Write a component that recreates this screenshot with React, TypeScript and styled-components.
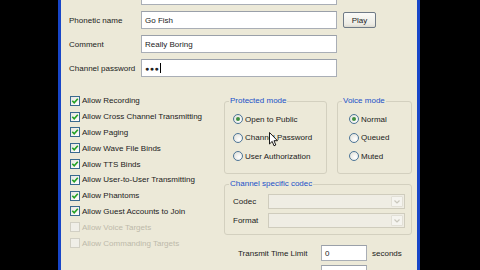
import React from 'react';
import styled, { createGlobalStyle } from 'styled-components';

const Global = createGlobalStyle`
  html, body { margin: 0; padding: 0; background: #000; width: 480px; height: 270px; overflow: hidden; }
  #root { width: 480px; height: 270px; }
`;

const Screen = styled.div`
  width: 480px;
  height: 270px;
  background: #000;
  display: flex;
`;

const Window = styled.div`
  position: relative;
  box-sizing: border-box;
  margin-left: 58px;
  width: 362px;
  height: 270px;
  border-left: 3px solid #1846c8;
  border-right: 3px solid #1846c8;
  background: #ece9d8;
  overflow: hidden;
  padding-left: 8px;
  font-family: "Liberation Sans", Arial, sans-serif;
  font-size: 8px;
  color: #1b1b1b;
`;

const Fields = styled.div`
  display: flex;
  flex-direction: column;
  gap: 6px;
  margin-top: -13px;
`;

const FieldRow = styled.div`
  display: flex;
  align-items: center;
  height: 18px;
`;

const FieldLabel = styled.span`
  width: 72px;
  flex: none;
`;

const TextBox = styled.div<{ $w?: number; $h?: number }>`
  box-sizing: border-box;
  width: ${p => p.$w ?? 196}px;
  height: ${p => p.$h ?? 18}px;
  flex: none;
  border: 1px solid #a9aeb6;
  border-top-color: #9aa0a9;
  background: #fff;
  display: flex;
  align-items: center;
  padding-left: 3px;
  color: #222;
`;

const Dots = styled.span`
  font-size: 7px;
  letter-spacing: 0.5px;
`;

const Caret = styled.span`
  display: inline-block;
  width: 1px;
  height: 10px;
  background: #000;
  margin-left: 1px;
`;

const PlayButton = styled.button`
  margin-left: 6px;
  width: 33px;
  height: 16px;
  box-sizing: border-box;
  border: 1px solid #6f7a86;
  border-radius: 2px;
  background: linear-gradient(#fbfbf8, #ecebe4 80%, #dcdad0);
  font-family: inherit;
  font-size: 8px;
  color: #222;
  padding: 0;
`;

const Middle = styled.div`
  display: flex;
  margin-top: 16px;
`;

const CheckList = styled.div`
  width: 155px;
  flex: none;
  display: flex;
  flex-direction: column;
`;

const CheckRow = styled.div<{ $disabled?: boolean }>`
  height: 15.8px;
  display: flex;
  align-items: center;
  gap: 2px;
  padding-left: 1px;
  color: ${p => (p.$disabled ? '#bdb9aa' : 'inherit')};
`;

const CheckBox = styled.span<{ $disabled?: boolean }>`
  box-sizing: border-box;
  width: 10px;
  height: 10px;
  flex: none;
  border: 1px solid ${p => (p.$disabled ? '#d2d0c4' : '#3a6a8f')};
  background: ${p => (p.$disabled ? '#f0efe8' : 'linear-gradient(135deg, #e6e6df, #ffffff)')};
  display: flex;
  align-items: center;
  justify-content: center;
`;

const RightCol = styled.div`
  width: 188px;
  flex: none;
  display: flex;
  flex-direction: column;
  margin-top: 3px;
`;

const GroupRow = styled.div`
  display: flex;
  gap: 10px;
`;

const Group = styled.fieldset<{ $w: number; $h: number }>`
  box-sizing: border-box;
  margin: 0;
  min-width: 0;
  width: ${p => p.$w}px;
  height: ${p => p.$h}px;
  padding: 0;
  border: 1px solid #d3d0bf;
  border-radius: 3px;
`;

const Legend = styled.legend`
  padding: 0 1px;
  margin-left: 4px;
  line-height: 10px;
  font-size: 8px;
  color: #2150c8;
`;

const RadioList = styled.div<{ $pl: number }>`
  display: flex;
  flex-direction: column;
  padding: 4px 0 0 ${p => p.$pl}px;
`;

const RadioRow = styled.div`
  height: 18.5px;
  display: flex;
  align-items: center;
  gap: 2px;
`;

const Radio = styled.span<{ $on?: boolean }>`
  box-sizing: border-box;
  width: 10px;
  height: 10px;
  flex: none;
  border-radius: 50%;
  border: 1px solid #4d7597;
  background: radial-gradient(circle at 65% 65%, #ffffff, #dcdcd4);
  display: flex;
  align-items: center;
  justify-content: center;
  &::after {
    content: '';
    display: ${p => (p.$on ? 'block' : 'none')};
    width: 4px;
    height: 4px;
    border-radius: 50%;
    background: #3f8f3f;
  }
`;

const CodecGroup = styled(Group)`
  margin-top: 5px;
`;

const CodecRows = styled.div`
  display: flex;
  flex-direction: column;
  gap: 4px;
  padding: 5px 0 0 8px;
`;

const CodecRow = styled.div`
  display: flex;
  align-items: center;
  height: 15px;
`;

const CodecLabel = styled.span`
  width: 35px;
  flex: none;
`;

const Select = styled.div`
  box-sizing: border-box;
  width: 137px;
  height: 15px;
  border: 1px solid #cfccbd;
  background: #efede4;
  display: flex;
  justify-content: flex-end;
  padding: 1px;
`;

const SelectArrow = styled.span`
  box-sizing: border-box;
  width: 12px;
  height: 100%;
  border: 1px solid #e2e0d6;
  border-radius: 1px;
  background: #f5f4ef;
  display: flex;
  align-items: center;
  justify-content: center;
`;

const LimitRows = styled.div`
  display: flex;
  flex-direction: column;
  gap: 4px;
  margin-top: 10px;
  padding-left: 14px;
`;

const LimitRow = styled.div`
  display: flex;
  align-items: center;
  height: 16px;
`;

const LimitLabel = styled.span`
  width: 83px;
  flex: none;
`;

const Unit = styled.span`
  margin-left: 5px;
`;

const Cursor = styled.svg`
  position: absolute;
  left: 208px;
  top: 132px;
`;

const Check = () => (
  <svg width="8" height="8" viewBox="0 0 8 8">
    <polyline points="1.3,3.8 3.2,5.8 6.8,1.8" fill="none" stroke="#22a122" strokeWidth="1.6" />
  </svg>
);

const Chevron = () => (
  <svg width="6" height="4" viewBox="0 0 6 4">
    <polyline points="0.5,0.5 3,3 5.5,0.5" fill="none" stroke="#c9c7bc" strokeWidth="1.2" />
  </svg>
);

const checks: { label: string; on: boolean; disabled?: boolean }[] = [
  { label: 'Allow Recording', on: true },
  { label: 'Allow Cross Channel Transmitting', on: true },
  { label: 'Allow Paging', on: true },
  { label: 'Allow Wave File Binds', on: true },
  { label: 'Allow TTS Binds', on: true },
  { label: 'Allow User-to-User Transmitting', on: true },
  { label: 'Allow Phantoms', on: true },
  { label: 'Allow Guest Accounts to Join', on: true },
  { label: 'Allow Voice Targets', on: false, disabled: true },
  { label: 'Allow Commanding Targets', on: false, disabled: true },
];

export default function App() {
  return (
    <>
      <Global />
      <Screen>
        <Window>
          <Fields>
            <FieldRow>
              <FieldLabel>Channel name</FieldLabel>
              <TextBox>Go Fish</TextBox>
            </FieldRow>
            <FieldRow>
              <FieldLabel>Phonetic name</FieldLabel>
              <TextBox>Go Fish</TextBox>
              <PlayButton>Play</PlayButton>
            </FieldRow>
            <FieldRow>
              <FieldLabel>Comment</FieldLabel>
              <TextBox>Really Boring</TextBox>
            </FieldRow>
            <FieldRow>
              <FieldLabel>Channel password</FieldLabel>
              <TextBox>
                <Dots>●●●</Dots>
                <Caret />
              </TextBox>
            </FieldRow>
          </Fields>

          <Middle>
            <CheckList>
              {checks.map(c => (
                <CheckRow key={c.label} $disabled={c.disabled}>
                  <CheckBox $disabled={c.disabled}>{c.on && <Check />}</CheckBox>
                  <span>{c.label}</span>
                </CheckRow>
              ))}
            </CheckList>

            <RightCol>
              <GroupRow>
                <Group $w={103} $h={78}>
                  <Legend>Protected mode</Legend>
                  <RadioList $pl={8}>
                    <RadioRow><Radio $on /> <span>Open to Public</span></RadioRow>
                    <RadioRow><Radio /> <span>Channel Password</span></RadioRow>
                    <RadioRow><Radio /> <span>User Authorization</span></RadioRow>
                  </RadioList>
                </Group>
                <Group $w={75} $h={78}>
                  <Legend>Voice mode</Legend>
                  <RadioList $pl={11}>
                    <RadioRow><Radio $on /> <span>Normal</span></RadioRow>
                    <RadioRow><Radio /> <span>Queued</span></RadioRow>
                    <RadioRow><Radio /> <span>Muted</span></RadioRow>
                  </RadioList>
                </Group>
              </GroupRow>

              <CodecGroup $w={188} $h={56}>
                <Legend>Channel specific codec</Legend>
                <CodecRows>
                  <CodecRow>
                    <CodecLabel>Codec</CodecLabel>
                    <Select><SelectArrow><Chevron /></SelectArrow></Select>
                  </CodecRow>
                  <CodecRow>
                    <CodecLabel>Format</CodecLabel>
                    <Select><SelectArrow><Chevron /></SelectArrow></Select>
                  </CodecRow>
                </CodecRows>
              </CodecGroup>

              <LimitRows>
                <LimitRow>
                  <LimitLabel>Transmit Time Limit</LimitLabel>
                  <TextBox $w={46} $h={16}>0</TextBox>
                  <Unit>seconds</Unit>
                </LimitRow>
                <LimitRow>
                  <LimitLabel>Idle Time Limit</LimitLabel>
                  <TextBox $w={46} $h={16}>0</TextBox>
                  <Unit>minutes</Unit>
                </LimitRow>
              </LimitRows>
            </RightCol>
          </Middle>

          <Cursor width="9" height="15" viewBox="0 0 9 15">
            <path d="M0.5,0.5 L0.5,12 L3.2,9.4 L5,13.8 L6.8,13 L5,8.7 L8.5,8.7 Z" fill="#fff" stroke="#000" strokeWidth="0.9" />
          </Cursor>
        </Window>
      </Screen>
    </>
  );
}
